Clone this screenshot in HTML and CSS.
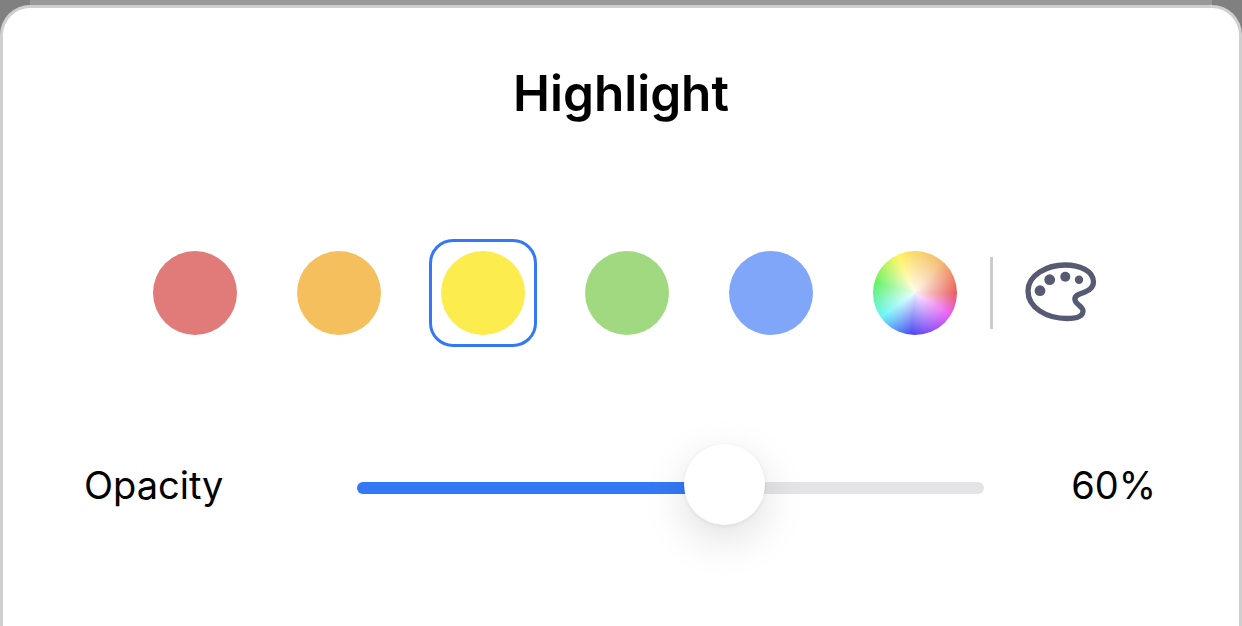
FILE: index.html
```html
<!DOCTYPE html>
<html lang="en">
<head>
	<meta charset="UTF-8">
	<title>Highlight</title>
	<link rel="stylesheet" href="styles.css">
</head>
<body>
	<div class="back-sheet"></div>
	<div class="sheet">
		<h1 class="sheet-title">Highlight</h1>
		<div class="color-row">
			<div class="swatch-box"><span class="swatch red"></span></div>
			<div class="swatch-box"><span class="swatch orange"></span></div>
			<div class="swatch-box selected"><span class="swatch yellow"></span></div>
			<div class="swatch-box"><span class="swatch green"></span></div>
			<div class="swatch-box"><span class="swatch blue"></span></div>
			<div class="swatch-box"><span class="swatch wheel"></span></div>
			<div class="divider"></div>
			<svg class="palette" width="72" height="60" viewBox="0 0 72 60">
				<path d="M40 3C22 3 3 13 3 29C3 46 22 56.5 42 56.5C52 56.5 58 54 58 49C58 44 51 43 50 38C49 33 55 32 60 30C65 28 68.500 25 68.500 20C68.500 9 55 3 40 3Z" fill="none" stroke="#565a72" stroke-width="5.300"/>
				<circle cx="15" cy="28.700" r="5.400" fill="#565a72"/>
				<circle cx="24.700" cy="17.700" r="5.400" fill="#565a72"/>
				<circle cx="40.300" cy="14.700" r="5" fill="#565a72"/>
				<circle cx="54" cy="17.700" r="4.200" fill="#565a72"/>
			</svg>
		</div>
		<div class="opacity-row">
			<span class="opacity-label">Opacity</span>
			<div class="slider">
				<div class="slider-fill" style="width: 58.600%"></div>
				<div class="slider-knob" style="left: 58.600%"></div>
			</div>
			<span class="opacity-value">60%</span>
		</div>
	</div>
</body>
</html>
```

FILE: styles.css
```css
* {
	padding: 0;
	margin: 0;
	box-sizing: border-box;
}
html, body {
	width: 100%;
	height: 100%;
	background: #808080;
	overflow: hidden;
	font-family: Inter, "Liberation Sans", sans-serif;
	color: #000000;
}
.back-sheet {
	height: 5px;
	margin: 0 30px;
	background: #999999;
}
.sheet {
	height: 621px;
	background: #FFFFFF;
	border: 3px solid #cfcfd2;
	border-bottom: 0;
	border-radius: 30px 30px 0 0;
}
.sheet-title {
	margin-top: 55px;
	height: 60px;
	font-size: 49.500px;
	line-height: 60px;
	font-weight: 600;
	text-align: center;
}
.color-row {
	display: flex;
	align-items: center;
	margin-top: 116px;
	padding-left: 138px;
	height: 108px;
}
.swatch-box {
	display: flex;
	align-items: center;
	justify-content: center;
	width: 108px;
	height: 108px;
	margin-right: 36px;
	border: 3px solid transparent;
	border-radius: 24px;
}
.swatch-box:nth-child(6) {
	margin-right: 0;
}
.swatch-box.selected {
	border-color: #3478f6;
}
.swatch {
	display: block;
	width: 84px;
	height: 84px;
	flex: none;
	border-radius: 50%;
}
.red { background: #e07b7a; }
.orange { background: #f5bf5e; }
.yellow { background: #fcec4e; }
.green { background: #a1d981; }
.blue { background: #80a6fa; }
.wheel {
	background:
		radial-gradient(circle, rgba(255, 255, 255, 0.9) 0, rgba(255, 255, 255, 0) 75%),
		conic-gradient(from 0deg, #fbd45f 0deg, #f2b56a 40deg, #e85050 90deg, #e850f5 122deg, #3c3cf5 185deg, #5ef5f8 235deg, #58f058 285deg, #fff450 335deg, #fbd45f 360deg);
}
.divider {
	width: 3px;
	height: 72px;
	margin-left: 21px;
	background: #cccccc;
}
.palette {
	flex: none;
	margin-left: 32px;
	margin-top: -2px;
}
.opacity-row {
	display: flex;
	align-items: center;
	margin-top: 100px;
	padding: 0 83px 0 81px;
	height: 81px;
}
.opacity-label {
	width: 273px;
	padding-bottom: 6px;
	font-size: 38px;
}
.slider {
	position: relative;
	width: 627px;
	height: 12px;
	border-radius: 6px;
	background: #e4e4e6;
}
.slider-fill {
	height: 12px;
	border-radius: 6px 0 0 6px;
	background: #3478f6;
}
.slider-knob {
	position: absolute;
	top: -38px;
	width: 81px;
	height: 81px;
	margin-left: -40px;
	border-radius: 50%;
	background: #FFFFFF;
	box-shadow: 0 14px 44px rgba(0, 0, 0, 0.13), 0 1px 4px rgba(0, 0, 0, 0.07);
}
.opacity-value {
	margin-left: auto;
	padding-bottom: 6px;
	font-size: 38px;
}
```
